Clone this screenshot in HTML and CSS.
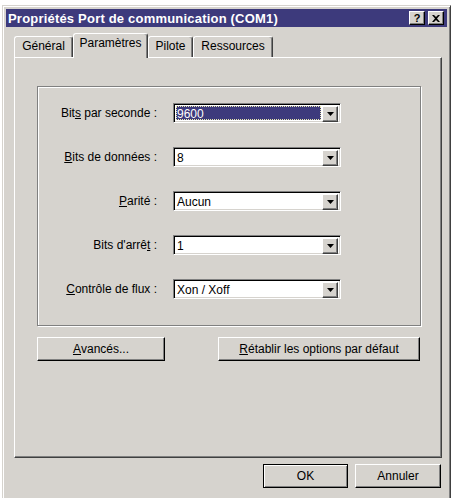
FILE: index.html
```html
<!DOCTYPE html>
<html lang="fr">
<head>
<meta charset="utf-8">
<title>Propriétés Port de communication (COM1)</title>
<link rel="stylesheet" href="styles.css">
</head>
<body>
<div class="window">
  <div class="titlebar">
    <span class="title">Propriétés Port de communication (COM1)</span>
    <div class="tbtns">
      <span class="tbtn help">?</span>
      <span class="tbtn close"><svg width="8" height="7" viewBox="0 0 8 7"><path d="M0 0h2l2 2 2-2h2L5 3.5 8 7H6L4 5 2 7H0l3-3.5z" fill="#000"/></svg></span>
    </div>
  </div>
  <div class="content">
    <div class="tabs">
      <div class="tab t1">Général</div>
      <div class="tab t2 sel">Paramètres</div>
      <div class="tab t3">Pilote</div>
      <div class="tab t4">Ressources</div>
    </div>
    <div class="panel">
      <div class="group">
        <div class="row">
          <span class="lbl">Bit<u>s</u> par seconde :</span>
          <div class="combo"><span class="val hl">9600</span><span class="drop"><svg width="7" height="4" viewBox="0 0 7 4"><path d="M0 0h7L3.5 4z" fill="#000"/></svg></span></div>
        </div>
        <div class="row">
          <span class="lbl"><u>B</u>its de données :</span>
          <div class="combo"><span class="val">8</span><span class="drop"><svg width="7" height="4" viewBox="0 0 7 4"><path d="M0 0h7L3.5 4z" fill="#000"/></svg></span></div>
        </div>
        <div class="row">
          <span class="lbl"><u>P</u>arité :</span>
          <div class="combo"><span class="val">Aucun</span><span class="drop"><svg width="7" height="4" viewBox="0 0 7 4"><path d="M0 0h7L3.5 4z" fill="#000"/></svg></span></div>
        </div>
        <div class="row">
          <span class="lbl">Bits d'arrê<u>t</u> :</span>
          <div class="combo"><span class="val">1</span><span class="drop"><svg width="7" height="4" viewBox="0 0 7 4"><path d="M0 0h7L3.5 4z" fill="#000"/></svg></span></div>
        </div>
        <div class="row">
          <span class="lbl"><u>C</u>ontrôle de flux :</span>
          <div class="combo"><span class="val">Xon / Xoff</span><span class="drop"><svg width="7" height="4" viewBox="0 0 7 4"><path d="M0 0h7L3.5 4z" fill="#000"/></svg></span></div>
        </div>
      </div>
      <div class="btnrow">
        <div class="btn adv"><u>A</u>vancés...</div>
        <div class="btn reset"><u>R</u>établir les options par défaut</div>
      </div>
    </div>
    <div class="footer">
      <div class="btn ok">OK</div>
      <div class="btn cancel">Annuler</div>
    </div>
  </div>
</div>
</body>
</html>
```
FILE: styles.css
```css
* { box-sizing: border-box; }
html, body { margin: 0; padding: 0; background: #fff; }
body {
  font-family: "Liberation Sans", Arial, sans-serif;
  font-size: 12px;
  color: #000;
  overflow: hidden;
  height: 498px;
}
.window {
  margin: 5px 0 0 2px;
  width: 449px;
  height: 500px;
  background: #d6d3ce;
  border: 1px solid;
  border-color: #d6d3ce #404040 #404040 #d6d3ce;
  box-shadow: inset 1px 1px 0 #fff, inset -1px -1px 0 #808080;
  padding: 3px;
}
.titlebar {
  height: 18px;
  background: #3d3a7c;
  display: flex;
  align-items: center;
  justify-content: space-between;
  padding: 0 3px 0 2px;
}
.title {
  color: #fff;
  font-weight: bold;
  font-size: 13px;
  letter-spacing: 0.2px;
  white-space: nowrap;
}
.tbtns { display: flex; gap: 3px; }
.tbtn {
  width: 16px;
  height: 14px;
  background: #d6d3ce;
  border: 1px solid;
  border-color: #fff #000 #000 #fff;
  box-shadow: inset -1px -1px 0 #808080;
  display: flex;
  align-items: center;
  justify-content: center;
  font-weight: bold;
  font-size: 11px;
  line-height: 1;
}
.content { padding: 6px 0 0 8px; }
.tabs {
  display: flex;
  align-items: flex-end;
  height: 24px;
}
.tab {
  height: 21px;
  border-top: 1px solid #fff;
  border-left: 1px solid #fff;
  border-right: 1px solid #404040;
  box-shadow: inset -1px 0 0 #808080;
  border-radius: 3px 3px 0 0;
  text-align: center;
  line-height: 19px;
  white-space: nowrap;
}
.t1 { width: 59px; }
.t2 { width: 75px; }
.t3 { width: 45px; }
.t4 { width: 80px; }
.tab.sel {
  height: 25px;
  margin-bottom: -1px;
  position: relative;
  z-index: 1;
  background: #d6d3ce;
  line-height: 19px;
}
.panel {
  width: 428px;
  height: 401px;
  border: 1px solid;
  border-color: #fff #404040 #404040 #fff;
  box-shadow: inset -1px -1px 0 #808080;
  padding: 28px 0 0 22px;
}
.group {
  width: 384px;
  height: 240px;
  border: 1px solid #808080;
  box-shadow: inset 1px 1px 0 #fff, 1px 1px 0 #fff;
  padding-top: 16px;
  display: flex;
  flex-direction: column;
  gap: 24px;
}
.row { display: flex; align-items: center; height: 20px; }
.lbl {
  width: 119px;
  text-align: right;
  margin-right: 16px;
  white-space: nowrap;
}
.combo {
  width: 168px;
  height: 20px;
  display: flex;
  background: #fff;
  border: 1px solid;
  border-color: #808080 #fff #fff #808080;
  box-shadow: inset 1px 1px 0 #000, inset -1px -1px 0 #d6d3ce;
  padding: 2px;
}
.val {
  flex: 1;
  line-height: 16px;
  padding-left: 1px;
  white-space: nowrap;
}
.val.hl {
  background: #3d3a7c;
  color: #fff;
  outline: 1px dotted #e8e8b0;
  outline-offset: -1px;
  margin-right: 1px;
}
.drop {
  width: 16px;
  height: 16px;
  background: #d6d3ce;
  border: 1px solid;
  border-color: #fff #404040 #404040 #fff;
  box-shadow: inset -1px -1px 0 #808080;
  display: flex;
  align-items: center;
  justify-content: center;
}
.btnrow {
  display: flex;
  margin-top: 11px;
}
.btn {
  height: 24px;
  background: #d6d3ce;
  border: 1px solid;
  border-color: #fff #000 #000 #fff;
  box-shadow: inset -1px -1px 0 #808080;
  display: flex;
  align-items: center;
  justify-content: center;
  white-space: nowrap;
}
.adv { width: 128px; }
.reset { width: 202px; margin-left: 53px; }
.footer {
  width: 428px;
  display: flex;
  justify-content: flex-end;
  gap: 7px;
  margin-top: 6px;
  padding-right: 1px;
}
.ok {
  width: 85px;
  border: 1px solid #000;
  box-shadow: inset 1px 1px 0 #fff, inset -1px -1px 0 #808080;
}
.cancel { width: 86px; }
```
